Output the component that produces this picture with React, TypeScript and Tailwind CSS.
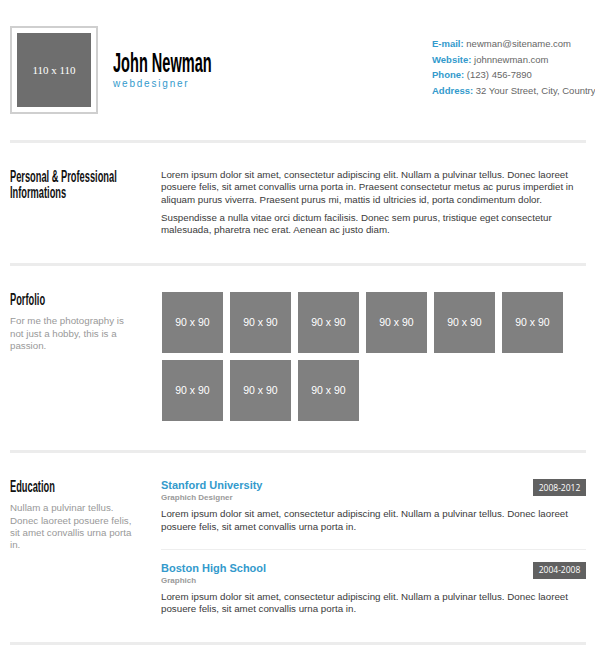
import React from 'react';

const blue = 'text-[#339acc]';

const SectionTitle: React.FC<{ children: React.ReactNode }> = ({ children }) => (
  <h2 className="origin-left scale-x-[0.58] w-[200px] whitespace-nowrap font-['Liberation_Sans',sans-serif] font-bold text-[16px] leading-[16px] text-[#111]">
    {children}
  </h2>
);

const Divider = () => <div className="h-[3px] bg-[#ececec]" />;

const eduText =
  'Lorem ipsum dolor sit amet, consectetur adipiscing elit. Nullam a pulvinar tellus. Donec laoreet posuere felis, sit amet convallis urna porta in.';

interface EduProps {
  school: string;
  role: string;
  years: string;
}

const EduItem: React.FC<EduProps> = ({ school, role, years }) => (
  <div>
    <div className="flex justify-between items-start">
      <div>
        <h3 className={`text-[11px] leading-[13px] font-bold ${blue}`}>{school}</h3>
        <p className="mt-px text-[8px] leading-[10px] font-bold text-[#9a9a9a]">{role}</p>
      </div>
      <span className="w-[53px] h-[17px] bg-[#616161] text-white text-[8.5px] font-['Open_Sans',sans-serif] flex items-center justify-center">
        {years}
      </span>
    </div>
    <p className="mt-[5px] text-[9.75px] leading-[12.3px] text-[#3a3a3a]">{eduText}</p>
  </div>
);

export default function App() {
  return (
    <div className="w-[595px] h-[645px] overflow-hidden bg-white pl-[10px] pr-[9px] font-['Liberation_Sans',Arial,sans-serif]">
      <header className="flex justify-between items-start pt-[26px] pb-[26px]">
        <div className="flex items-center gap-[15px]">
          <div className="w-[88px] h-[88px] border-2 border-[#cfcfcf] p-[5px] flex">
            <div className="flex-1 bg-[#6e6e6e] flex items-center justify-center text-white text-[11px] font-['Liberation_Serif',serif]">
              110 x 110
            </div>
          </div>
          <div className="pb-[2px]">
            <h1 className="origin-left scale-x-[0.52] w-[190px] whitespace-nowrap font-['Liberation_Sans',sans-serif] font-bold text-[28px] leading-[28px] text-black">
              John Newman
            </h1>
            <p className={`mt-[1px] text-[10px] leading-[12px] tracking-[1.8px] ${blue}`}>webdesigner</p>
          </div>
        </div>
        <ul className="mt-[10px] w-[154px] text-[9.5px] leading-[15.5px] text-[#666]">
          <li><span className={`font-bold ${blue}`}>E-mail:</span> newman@sitename.com</li>
          <li><span className={`font-bold ${blue}`}>Website:</span> johnnewman.com</li>
          <li><span className={`font-bold ${blue}`}>Phone:</span> (123) 456-7890</li>
          <li className="whitespace-nowrap"><span className={`font-bold ${blue}`}>Address:</span> 32 Your Street, City, Country</li>
        </ul>
      </header>

      <Divider />

      <section className="flex gap-[26px] pt-[26px] pb-[27px]">
        <div className="w-[125px] shrink-0">
          <SectionTitle>
            Personal &amp; Professional
            <br />
            Informations
          </SectionTitle>
        </div>
        <div className="flex-1 text-[9.75px] leading-[12.3px] text-[#3a3a3a]">
          <p>
            Lorem ipsum dolor sit amet, consectetur adipiscing elit. Nullam a pulvinar tellus. Donec laoreet posuere
            felis, sit amet convallis urna porta in. Praesent consectetur metus ac purus imperdiet in aliquam purus
            viverra. Praesent purus mi, mattis id ultricies id, porta condimentum dolor.
          </p>
          <p className="mt-[6px]">
            Suspendisse a nulla vitae orci dictum facilisis. Donec sem purus, tristique eget consectetur malesuada,
            pharetra nec erat. Aenean ac justo diam.
          </p>
        </div>
      </section>

      <Divider />

      <section className="flex gap-[26px] pt-[26px] pb-[29px]">
        <div className="w-[125px] shrink-0">
          <SectionTitle>Porfolio</SectionTitle>
          <p className="mt-[7px] text-[9.75px] leading-[12.2px] text-[#999]">
            For me the photography is not just a hobby, this is a passion.
          </p>
        </div>
        <div className="flex-1 flex flex-wrap content-start gap-[7px] pl-px">
          {Array.from({ length: 9 }).map((_, i) => (
            <div
              key={i}
              className="w-[61px] h-[61px] bg-[#808080] flex items-center justify-center text-white text-[10.5px]"
            >
              90 x 90
            </div>
          ))}
        </div>
      </section>

      <Divider />

      <section className="flex gap-[26px] pt-[26px] pb-[26px]">
        <div className="w-[125px] shrink-0">
          <SectionTitle>Education</SectionTitle>
          <p className="mt-[7px] text-[9.75px] leading-[12.3px] text-[#999]">
            Nullam a pulvinar tellus. Donec laoreet posuere felis, sit amet convallis urna porta in.
          </p>
        </div>
        <div className="flex-1">
          <div className="pb-[16px] border-b border-[#eeeeee]">
            <EduItem school="Stanford University" role="Graphich Designer" years="2008-2012" />
          </div>
          <div className="pt-[12px]">
            <EduItem school="Boston High School" role="Graphich" years="2004-2008" />
          </div>
        </div>
      </section>

      <Divider />
    </div>
  );
}
